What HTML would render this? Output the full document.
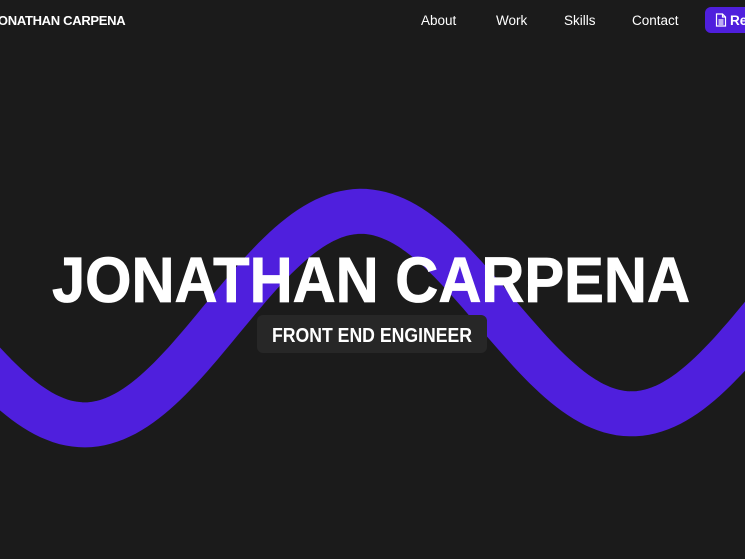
<!DOCTYPE html>
<html><head><meta charset="utf-8"><style>
html,body{margin:0;padding:0;background:#1b1b1b;width:745px;height:559px;overflow:hidden;font-family:"Liberation Sans",sans-serif;}
.logo{position:absolute;left:-9px;top:13px;color:#fff;font-weight:bold;font-size:13px;letter-spacing:-0.3px;}
.nav a{position:absolute;top:13px;color:#fff;font-size:13.5px;text-decoration:none;}
.btn{position:absolute;left:705px;top:7px;width:60px;height:26px;background:#4f1fdd;border-radius:6px;color:#fff;font-weight:bold;font-size:13.5px;}
</style></head><body>
<svg width="745" height="559" style="position:absolute;left:0;top:0">
<path id="w" fill="none" stroke="#4f1fdd" stroke-width="45" d=""/>
<text x="371" y="302" fill="#fff" font-family="Liberation Sans, sans-serif" font-weight="bold" font-size="64" text-anchor="middle" textLength="638" lengthAdjust="spacingAndGlyphs" stroke="#fff" stroke-width="0.8">JONATHAN CARPENA</text>
<rect x="257" y="315" width="230" height="38" rx="6" fill="#272727"/>
<text x="372" y="342" fill="#fff" font-family="Liberation Sans, sans-serif" font-weight="bold" font-size="20" text-anchor="middle" textLength="200" lengthAdjust="spacingAndGlyphs">FRONT END ENGINEER</text>
</svg>
<script>
var d="";for(var x=-40;x<=790;x+=5){var mid=315.5-(x-352)*11/547;var y=mid+104*Math.cos(2*Math.PI*(x-86)/547);d+=(x==-40?"M":"L")+x+" "+y.toFixed(1);}
document.getElementById("w").setAttribute("d",d);
</script>
<div class="logo">JONATHAN CARPENA</div>
<div class="nav"><a style="left:421px">About</a><a style="left:496px">Work</a><a style="left:564px">Skills</a><a style="left:632px">Contact</a></div>
<div class="btn"><svg width="12" height="14" style="position:absolute;left:10px;top:6px" viewBox="0 0 12 14"><path d="M1.5 1h6l3 3v9h-9z M7.5 1v3h3 M3.5 7h5 M3.5 9h5 M3.5 11h5" fill="none" stroke="#fff" stroke-width="1.2"/></svg><span style="position:absolute;left:25px;top:6px">Re</span></div>
</body></html>
